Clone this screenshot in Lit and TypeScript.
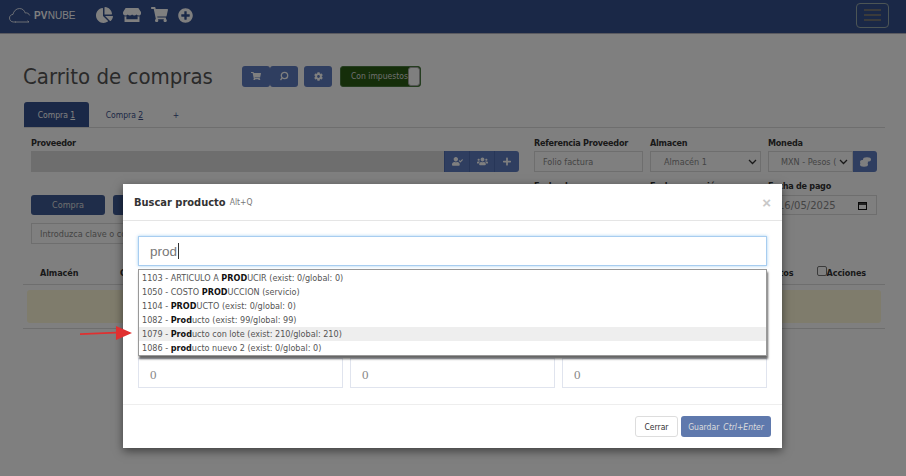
import { LitElement, html, css } from "lit";
import { customElement } from "lit/decorators.js";

const I: Record<string, [string, string]> = {
  pie: ["0 0 544 512", "M527.79 288H290.5l158.03 158.03c6.04 6.04 15.98 6.53 22.19.68 38.7-36.46 65.32-85.61 73.13-140.86 1.34-9.46-6.51-17.85-16.06-17.85zm-15.83-64.8C503.72 103.74 408.26 8.28 288.8.04 279.68-.59 272 7.1 272 16.24V240h223.77c9.14 0 16.82-7.68 16.19-16.8zM224 288V50.71c0-9.55-8.39-17.4-17.84-16.06C86.99 51.49-4.1 155.6.14 280.37 4.5 408.51 114.83 513.59 243.03 511.98c50.4-.63 96.97-16.87 135.26-44.03 7.9-5.6 8.42-17.23 1.57-24.08L224 288z"],
  store: ["0 0 616 512", "M602 118.6L537.1 15C531.3 5.7 521 0 510 0H106C95 0 84.7 5.7 78.9 15L14 118.6c-33.9 54.1-3.9 129.3 59.4 137.9 4.6.6 9.1.9 13.7.9 29.9 0 56.4-13.1 74.7-33.4 18.3 20.3 44.9 33.4 74.7 33.4 29.9 0 56.4-13.1 74.7-33.4 18.3 20.3 44.9 33.4 74.7 33.4 29.9 0 56.4-13.1 74.7-33.4 18.4 20.3 44.9 33.4 74.7 33.4 4.7 0 9.2-.3 13.7-.9 63.5-8.5 93.6-83.7 59.6-137.9zM529.5 288c-10 0-19.9-1.5-29.5-3.8V384H116v-99.8c-9.6 2.2-19.5 3.8-29.5 3.8-6 0-12.1-.4-18-1.2-5.6-.8-11.1-2.1-16.4-3.6V480c0 17.7 14.3 32 32 32h448c17.7 0 32-14.3 32-32V283.2c-5.4 1.6-10.8 2.9-16.4 3.6-6.1.8-12.1 1.2-18.2 1.2z"],
  cart: ["0 0 576 512", "M528.12 301.319l47.273-208C578.806 78.301 567.391 64 551.99 64H159.208l-9.166-44.81C147.758 8.021 137.93 0 126.529 0H24C10.745 0 0 10.745 0 24v16c0 13.255 10.745 24 24 24h69.883l70.248 343.435C147.325 417.1 136 435.222 136 456c0 30.928 25.072 56 56 56s56-25.072 56-56c0-15.674-6.447-29.835-16.824-40h209.647C430.447 426.165 424 440.326 424 456c0 30.928 25.072 56 56 56s56-25.072 56-56c0-22.172-12.888-41.332-31.579-50.405l5.517-24.276c3.413-15.018-8.002-29.319-23.403-29.319H218.117l-6.545-32h293.145c11.206 0 20.92-7.754 23.403-18.681z"],
  pluscircle: ["0 0 512 512", "M256 8C119 8 8 119 8 256s111 248 248 248 248-111 248-248S393 8 256 8zm144 276c0 6.6-5.4 12-12 12h-92v92c0 6.6-5.4 12-12 12h-56c-6.6 0-12-5.4-12-12v-92h-92c-6.6 0-12-5.4-12-12v-56c0-6.6 5.4-12 12-12h92v-92c0-6.6 5.4-12 12-12h56c6.6 0 12 5.4 12 12v92h92c6.6 0 12 5.4 12 12v56z"],
  usercheck: ["0 0 640 512", "M224 256c70.7 0 128-57.3 128-128S294.7 0 224 0 96 57.3 96 128s57.3 128 128 128zm89.6 32h-16.7c-22.2 10.2-46.9 16-72.9 16s-50.6-5.8-72.9-16h-16.7C60.2 288 0 348.2 0 422.4V464c0 26.5 21.5 48 48 48h352c26.5 0 48-21.5 48-48v-41.6c0-74.2-60.2-134.4-134.4-134.4zm323-128.4l-27.8-28.1c-4.6-4.7-12.1-4.7-16.8-.1l-104.8 104-45.5-45.8c-4.6-4.7-12.1-4.7-16.8-.1l-28.1 27.9c-4.7 4.6-4.7 12.1-.1 16.8l81.7 82.3c4.6 4.7 12.1 4.7 16.8.1l141.3-140.2c4.6-4.7 4.7-12.2.1-16.8z"],
  users: ["0 0 640 512", "M96 224c35.3 0 64-28.7 64-64s-28.7-64-64-64-64 28.7-64 64 28.7 64 64 64zm448 0c35.3 0 64-28.7 64-64s-28.7-64-64-64-64 28.7-64 64 28.7 64 64 64zm32 32h-64c-17.6 0-33.5 7.1-45.1 18.6 40.3 22.1 68.9 62 75.1 109.4h66c17.7 0 32-14.3 32-32v-32c0-35.3-28.7-64-64-64zm-256 0c61.9 0 112-50.1 112-112S381.9 32 320 32 208 82.1 208 144s50.1 112 112 112zm76.8 32h-8.3c-20.8 10-43.9 16-68.5 16s-47.6-6-68.5-16h-8.3C179.6 288 128 339.6 128 403.2V432c0 26.5 21.5 48 48 48h288c26.5 0 48-21.5 48-48v-28.8c0-63.6-51.6-115.2-115.2-115.2zm-223.7-13.4C161.5 263.1 145.6 256 128 256H64c-35.3 0-64 28.7-64 64v32c0 17.7 14.3 32 32 32h65.9c6.3-47.4 34.9-87.3 75.2-109.4z"],
  cog: ["0 0 512 512", "M487.4 315.7l-42.6-24.6c4.3-23.2 4.3-47 0-70.2l42.6-24.6c4.9-2.8 7.1-8.6 5.5-14-11.1-35.6-30-67.8-54.7-94.6-3.8-4.1-10-5.1-14.8-2.3L380.8 110c-17.9-15.4-38.5-27.3-60.8-35.1V25.8c0-5.6-3.9-10.5-9.4-11.7-36.7-8.2-74.3-7.8-109.2 0-5.5 1.2-9.4 6.1-9.4 11.7V75c-22.2 7.9-42.8 19.8-60.8 35.1L88.7 85.5c-4.9-2.8-11-1.9-14.8 2.3-24.7 26.7-43.6 58.9-54.7 94.6-1.7 5.4.6 11.2 5.5 14L67.3 221c-4.3 23.2-4.3 47 0 70.2l-42.6 24.6c-4.9 2.8-7.1 8.6-5.5 14 11.1 35.6 30 67.8 54.7 94.6 3.8 4.1 10 5.1 14.8 2.3l42.6-24.6c17.9 15.4 38.5 27.3 60.8 35.1v49.2c0 5.6 3.9 10.5 9.4 11.7 36.7 8.2 74.3 7.8 109.2 0 5.5-1.2 9.4-6.1 9.4-11.7v-49.2c22.2-7.9 42.8-19.8 60.8-35.1l42.6 24.6c4.9 2.8 11 1.9 14.8-2.3 24.7-26.7 43.6-58.9 54.7-94.6 1.5-5.5-.7-11.3-5.6-14.1zM256 336c-44.1 0-80-35.9-80-80s35.9-80 80-80 80 35.9 80 80-35.9 80-80 80z"],
  plus: ["0 0 448 512", "M416 208H272V64c0-17.67-14.33-32-32-32h-32c-17.67 0-32 14.33-32 32v144H32c-17.67 0-32 14.33-32 32v32c0 17.67 14.33 32 32 32h144v144c0 17.67 14.33 32 32 32h32c17.67 0 32-14.33 32-32V304h144c17.67 0 32-14.33 32-32v-32c0-17.67-14.33-32-32-32z"],
};

const icon = (n: string, w: number) => {
  const [vb, d] = I[n];
  return html`<svg class="ic" viewBox=${vb} width=${w} fill="currentColor"><path d=${d}></path></svg>`;
};

const ROWS = [
  ["1103", "ARTICULO A ", "PROD", "UCIR (exist: 0/global: 0)"],
  ["1050", "COSTO ", "PROD", "UCCION (servicio)"],
  ["1104", "", "PROD", "UCTO (exist: 0/global: 0)"],
  ["1082", "", "Prod", "ucto (exist: 99/global: 99)"],
  ["1079", "", "Prod", "ucto con lote (exist: 210/global: 210)"],
  ["1086", "", "prod", "ucto nuevo 2 (exist: 0/global: 0)"],
];

function chev() {
  return html`<svg width="9" height="6" viewBox="0 0 9 6" fill="none" stroke="#333" stroke-width="1.3"><path d="M1 1l3.5 3.5L8 1"></path></svg>`;
}
function coins() {
  return html`<svg width="11" height="10" viewBox="0 0 11 10" fill="currentColor"><ellipse cx="7" cy="2.5" rx="4" ry="2.2"></ellipse><ellipse cx="4" cy="5" rx="4" ry="2.2"></ellipse><ellipse cx="4" cy="7.5" rx="4" ry="2.2"></ellipse></svg>`;
}

@customElement("app-root")
export class AppRoot extends LitElement {
  static styles = css`
    :host { display: block; position: relative; width: 906px; height: 476px; overflow: hidden; background: #fff;
      font-family: "DejaVu Sans", sans-serif; font-stretch: condensed; font-size: 9px; color: #333; }
    * { box-sizing: border-box; }
    .ic { display: block; }
    nav { height: 34px; background: #34508e; border-bottom: 1px solid #b4b4c0; display: flex; align-items: center; padding: 0 17px 3px 9px; color: #fff; }
    .logo { display: flex; align-items: center; width: 87px; }
    .logo svg { margin-right: 3px; }
    .logo b { font: 700 10px "Liberation Sans", sans-serif; letter-spacing: .2px; }
    .logo span { font: 400 10px "Liberation Sans", sans-serif; }
    .navic { display: flex; gap: 10px; align-items: center; }
    .burger { margin-left: auto; width: 33px; height: 25px; border: 1px solid #9aa; border-radius: 4px; display: flex; flex-direction: column; gap: 3px; align-items: center; justify-content: center; }
    .burger i { display: block; width: 17px; height: 2px; background: #777; }
    main { padding: 0 21px 0 23px; }
    .head { display: flex; align-items: center; height: 34px; margin-top: 25px; }
    h1 { margin: 0; width: 219px; font-size: 22px; font-weight: 400; color: #555; white-space: nowrap; }
    .btn { background: #5f7cc0; color: #fff; display: flex; align-items: center; justify-content: center; height: 21px; border-radius: 3px; }
    .head .btn { width: 28px; }
    .head .gap { margin-left: 6px; }
    .toggle { margin-left: 8px; width: 81px; height: 21px; border-radius: 3px; background: #2a5c14; color: #ddd; display: flex; align-items: center; font-size: 8.5px; padding-left: 10px; position: relative; border: 1px solid #4a7a40; }
    .toggle i { position: absolute; right: 0; top: 0; bottom: 0; width: 12px; background: #fff; border-radius: 3px; border: 1px solid #aaa; }
    .tabs { display: flex; height: 26px; margin: 9px 0 0 1px; border-bottom: 1px solid #ddd; align-items: stretch; font-size: 8.5px; color: #3a4f8c; }
    .tab { display: flex; align-items: center; justify-content: center; width: 71px; }
    .tab.on { width: 65px; background: #34508e; color: #fff; border-radius: 3px 3px 0 0; }
    .tab.add { width: 32px; }
    .tab u { text-underline-offset: 1px; }
    .form { padding: 0 8px; }
    .row { display: flex; margin-top: 9px; }
    .row.next { margin-top: 8px; }
    .row.next label { height: 15px; }
    .row.next .inp, .row.next .btn { height: 20px; }
    .f { display: flex; flex-direction: column; }
    .col-main { width: 503px; }
    .col-ref { width: 116px; }
    .col-alm { width: 118px; }
    label { font-weight: 700; font-size: 9px; letter-spacing: -.25px; height: 14px; line-height: 13px; color: #333; white-space: nowrap; }
    .inp { height: 21px; border: 1px solid #ddd; background: #fff; color: #888; display: flex; align-items: center; padding: 0 8px; white-space: nowrap; overflow: hidden; width: 109px; }
    .inp.alm { width: 111px; padding: 0 3px 0 13px; justify-content: space-between; }
    .inp.mon { width: 85px; padding: 0 4px 0 12px; justify-content: space-between; }
    .inp.date { justify-content: space-between; padding: 0 9px; font-size: 10px; font-stretch: normal; }
    .inp.prov { width: 413px; background: #ddd; }
    .grp { display: flex; }
    .grp .sq { border-radius: 0; border-left: 1px solid #4f6cb0; width: 25px; }
    .grp .last { border-radius: 0 3px 3px 0; }
    .grp .mini { width: 24px; border-radius: 0 3px 3px 0; }
    .pair { display: flex; gap: 8px; }
    .dark { background: #3f5a94; width: 74px; font-size: 9px; color: #ddd; flex: none; }
    .wide { margin-top: 8px; width: 300px; }
    .table { display: flex; align-items: center; height: 23px; margin-top: 18px; border-bottom: 1px solid #ddd; font-weight: 700; padding: 0 19px 0 17px; font-size: 9px; letter-spacing: -.1px; }
    .t1 { width: 80px; }
    .t2 { margin-left: auto; margin-right: 23px; }
    .table .cb { width: 10px; height: 10px; border: 1px solid #777; border-radius: 2px; background: #fff; margin: 0 0 4px 0; }
    .alert { height: 44px; padding: 5px 4px; border-bottom: 1px solid #ddd; }
    .alert div { height: 33px; background: #fff8d8; border-radius: 3px; }
    .overlay { position: absolute; inset: 0; background: rgba(0,0,0,.5); padding: 184px 124px 0 123px; }
    .modal { background: #fff; height: 264px; box-shadow: 0 3px 9px rgba(0,0,0,.5); position: relative; }
    .mh { height: 37px; border-bottom: 1px solid #e5e5e5; display: flex; align-items: center; padding: 0 11px; }
    .mh b { font-size: 11px; color: #333; }
    .mh small { font-size: 8.5px; color: #777; margin-left: 4px; }
    .mh .x { margin-left: auto; font: 700 15px "Liberation Sans", sans-serif; color: #c8c8c8; }
    .mb { padding: 15px 15px 16px; }
    .search { height: 30px; border: 1px solid #a8cdf0; box-shadow: 0 0 3px rgba(102,175,233,.6); display: flex; align-items: center; padding: 0 11px; font: 400 13.5px "Liberation Sans", sans-serif; color: #777; }
    .caret { display: inline-block; width: 1px; height: 16px; background: #333; margin-left: 1px; }
    .three { display: grid; grid-template-columns: 205px 205px 205px; gap: 7px; margin-top: 92px; }
    .three div { height: 30px; border: 1px solid #e0e4ee; display: flex; align-items: center; padding: 3px 11px 0; font: 400 13px "Liberation Serif", serif; color: #888; }
    .dd { position: absolute; left: 15px; top: 85px; width: 629px; height: 87px; background: #fff; border: 1px solid #999; box-shadow: 1px 3px 2px rgba(0,0,0,.6); padding-top: 1px; }
    .dd div { height: 14px; line-height: 14px; padding: 0 3px; color: #555; font-size: 9px; white-space: nowrap; }
    .dd div.hl { background: #eee; }
    .dd b { color: #111; }
    .mf { border-top: 1px solid #eee; height: 44px; display: flex; justify-content: flex-end; align-items: flex-start; padding: 11px 11px 0 0; gap: 3px; }
    .mf .c { width: 43px; height: 21px; border: 1px solid #ddd; border-radius: 3px; display: flex; align-items: center; justify-content: center; font-size: 8.5px; color: #333; }
    .mf .g { width: 90px; height: 21px; background: #5f79ad; color: #ddd; border-radius: 3px; display: flex; align-items: center; justify-content: center; font-size: 8.5px; }
    .mf em { margin-left: 4px; }
    .arrow { position: absolute; left: 80px; top: 326px; }
  `;

  render() {
    return html`
      <nav>
        <div class="logo">
          <svg width="22" height="17" viewBox="0 0 22 17" fill="none" stroke="#fff" stroke-width=".8"><path d="M7 15H4.5C2 15 .5 13 .5 11S2 7.6 4 7.4C4.6 4.4 7 1.5 10.5 1.5c3 0 5 2 5.7 4.5 1.8-.5 3.8.5 4.6 2.5M6 15h14l-1.5-1.2"></path></svg>
          <b>PV</b><span>NUBE</span>
        </div>
        <div class="navic">
          ${icon("pie", 17)}${icon("store", 18)}${icon("cart", 17)}${icon("pluscircle", 15)}
        </div>
        <div class="burger"><i></i><i></i><i></i></div>
      </nav>
      <main>
        <div class="head">
          <h1>Carrito de compras</h1>
          <div class="btn">${icon("cart", 10)}</div>
          <div class="btn">
            <svg width="10" height="10" viewBox="0 0 10 10" fill="none" stroke="currentColor" stroke-width="1.3"><circle cx="5.5" cy="4.5" r="3.2"></circle><path d="M3 7L1.5 9"></path></svg>
          </div>
          <div class="btn gap">${icon("cog", 9)}</div>
          <div class="toggle">Con impuestos<i></i></div>
        </div>
        <div class="tabs">
          <div class="tab on"><span>Compra <u>1</u></span></div>
          <div class="tab"><span>Compra <u>2</u></span></div>
          <div class="tab add">+</div>
        </div>
        <div class="form">
          <div class="row">
            <div class="f col-main">
              <label>Proveedor</label>
              <div class="grp">
                <div class="inp prov"></div>
                <div class="btn sq">${icon("usercheck", 11)}</div>
                <div class="btn sq">${icon("users", 11)}</div>
                <div class="btn sq last">${icon("plus", 8)}</div>
              </div>
            </div>
            <div class="f col-ref"><label>Referencia Proveedor</label><div class="inp">Folio factura</div></div>
            <div class="f col-alm"><label>Almacen</label><div class="inp alm">Almacén 1 ${chev()}</div></div>
            <div class="f"><label>Moneda</label>
              <div class="grp"><div class="inp mon">MXN - Pesos ( ${chev()}</div><div class="btn mini">${coins()}</div></div>
            </div>
          </div>
          <div class="row next">
            <div class="f col-main">
              <label></label>
              <div class="pair"><div class="btn dark">Compra</div><div class="btn dark"></div></div>
            </div>
            <div class="f col-ref"><label>Fecha de compra</label><div class="inp"></div></div>
            <div class="f col-alm"><label>Fecha recepción</label><div class="inp alm"></div></div>
            <div class="f"><label>Fecha de pago</label><div class="inp date">16/05/2025
              <svg width="9" height="9" viewBox="0 0 9 9" fill="none" stroke="#111" stroke-width="1"><rect x=".5" y="1.5" width="8" height="7"></rect><path d="M.5 3h8" stroke-width="1.6"></path></svg></div></div>
          </div>
          <div class="inp wide">Introduzca clave o código</div>
        </div>
        <div class="table">
          <span class="t1">Almacén</span><span>Código</span>
          <span class="t2">Impuestos</span>
          <span class="cb"></span><span>Acciones</span>
        </div>
        <div class="alert"><div></div></div>
      </main>
      <div class="overlay">
        <div class="modal">
          <div class="mh"><b>Buscar producto</b><small>Alt+Q</small><span class="x">×</span></div>
          <div class="mb">
            <div class="search">prod<span class="caret"></span></div>
            <div class="three"><div>0</div><div>0</div><div>0</div></div>
          </div>
          <div class="mf"><div class="c">Cerrar</div><div class="g">Guardar <em>Ctrl+Enter</em></div></div>
          <div class="dd">
            ${ROWS.map((r, i) => html`<div class=${i === 4 ? "hl" : ""}>${r[0]} - ${r[1]}<b>${r[2]}</b>${r[3]}</div>`)}
          </div>
        </div>
        <svg class="arrow" width="52" height="14" viewBox="0 0 52 14"><path d="M0 7.2L36 5.8V0L52 7 36 14V7.6L0 9z" fill="#e03030"></path></svg>
      </div>
    `;
  }
}
